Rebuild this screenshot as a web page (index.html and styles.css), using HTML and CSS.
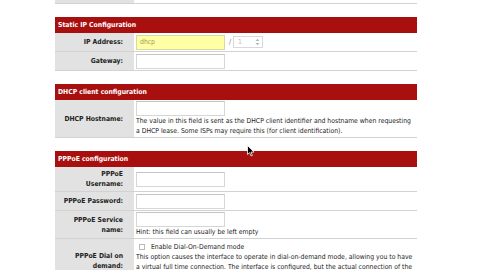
FILE: index.html
```html
<!DOCTYPE html>
<html lang="en">
<head>
  <meta charset="UTF-8" />
  <title>Interfaces: WAN</title>
  <link rel="stylesheet" href="styles.css">
</head>
<body>
  <div class="page">
    <div class="section first">
      <div class="row prev">
        <div class="label"></div>
        <div class="cell"><span class="faded">is not set.</span></div>
      </div>
    </div>

    <div class="section">
      <div class="topic">Static IP Configuration</div>
      <div class="row">
        <div class="label">IP Address:</div>
        <div class="cell inline">
          <div class="input yellow">dhcp</div>
          <span class="slash">/</span>
          <div class="select">
            <span>1</span>
            <svg width="5" height="8" viewBox="0 0 5 8"><path d="M0.5 3 L2.5 0.8 L4.5 3 Z M0.5 5 L2.5 7.2 L4.5 5 Z" fill="#b5b5b5"/></svg>
          </div>
        </div>
      </div>
      <div class="row">
        <div class="label">Gateway:</div>
        <div class="cell"><div class="input"></div></div>
      </div>
    </div>

    <div class="section">
      <div class="topic">DHCP client configuration</div>
      <div class="row">
        <div class="label">DHCP Hostname:</div>
        <div class="cell">
          <div class="input"></div>
          <p class="desc">The value in this field is sent as the DHCP client identifier and hostname when requesting a DHCP lease. Some ISPs may require this (for client identification).</p>
        </div>
      </div>
    </div>

    <div class="section">
      <div class="topic">PPPoE configuration</div>
      <div class="row">
        <div class="label">PPPoE<br>Username:</div>
        <div class="cell"><div class="input"></div></div>
      </div>
      <div class="row">
        <div class="label">PPPoE Password:</div>
        <div class="cell"><div class="input"></div></div>
      </div>
      <div class="row">
        <div class="label">PPPoE Service<br>name:</div>
        <div class="cell">
          <div class="input"></div>
          <p class="desc">Hint: this field can usually be left empty</p>
        </div>
      </div>
      <div class="row dial">
        <div class="label">PPPoE Dial on<br>demand:</div>
        <div class="cell">
          <label class="check"><span class="box"></span>Enable Dial-On-Demand mode</label>
          <p class="desc">This option causes the interface to operate in dial-on-demand mode, allowing you to have a virtual full time connection. The interface is configured, but the actual connection of the link is delayed until qualifying outgoing traffic is detected.</p>
        </div>
      </div>
    </div>
  </div>

  <svg class="cursor" width="8" height="12" viewBox="0 0 8 12">
    <path d="M0.5 0.5 L0.5 9.5 L2.6 7.6 L4 11 L5.4 10.4 L4 7.1 L7 7.1 Z" fill="#000" stroke="#fff" stroke-width="0.8"/>
  </svg>
</body>
</html>
```

FILE: styles.css
```css
:root {
  --topic: #a8100f;
  --label-bg: #e2e2e2;
  --line: #d2d2d2;
  --text: #222;
}

* {
  box-sizing: border-box;
}

body {
  margin: 0;
  background: #fff;
  font-family: 'DejaVu Sans Condensed', 'DejaVu Sans', Verdana, sans-serif;
  font-size: 6.8px;
  color: var(--text);
  overflow: hidden;
}

.page {
  width: 362px;
  margin-left: 55px;
  margin-top: -15px;
}

.section {
  margin-bottom: 13px;
}

.topic {
  height: 16px;
  line-height: 16px;
  padding-left: 3px;
  background: var(--topic);
  color: #fff;
  font-weight: bold;
}

.row {
  display: grid;
  grid-template-columns: 79px 1fr;
  border-bottom: 1px solid var(--line);
  min-height: 19px;
}

.label {
  background: var(--label-bg);
  display: flex;
  align-items: center;
  justify-content: flex-end;
  text-align: right;
  padding: 2px 11px 2px 4px;
  font-weight: bold;
  line-height: 10px;
}

.cell {
  padding: 1px 2px;
  display: flex;
  flex-direction: column;
  justify-content: center;
}

.cell.inline {
  flex-direction: row;
  align-items: center;
  justify-content: flex-start;
}

.dial .cell {
  justify-content: flex-start;
  padding-top: 3px;
}

.faded {
  color: #999;
}

.input {
  width: 89px;
  height: 15px;
  border: 1px solid #d6d6d6;
  border-top-color: #c4c4c4;
  background: #fff;
  padding-left: 3px;
  line-height: 13px;
  color: #9a9a5a;
}

.input.yellow {
  background: #ffffa6;
  border-color: #d8d8a0;
}

.slash {
  margin: 0 2px 0 4px;
  color: #777;
}

.select {
  width: 30px;
  height: 12px;
  border: 1px solid #d8d8d8;
  display: flex;
  align-items: center;
  justify-content: space-between;
  padding: 0 2px 0 4px;
  color: #bbb;
}

.desc {
  margin: 0;
  line-height: 10px;
}

.check {
  display: flex;
  align-items: center;
  gap: 6px;
  line-height: 10px;
  padding-left: 3px;
}

.box {
  width: 6px;
  height: 6px;
  border: 1px solid #bbb;
  background: #fff;
}

.cursor {
  position: absolute;
  left: 247px;
  top: 145px;
}
```
